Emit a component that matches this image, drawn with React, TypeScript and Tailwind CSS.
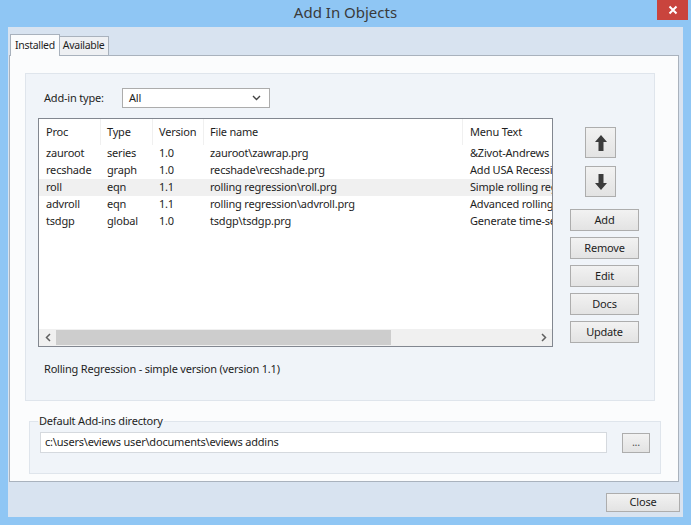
import React from "react";

const rows = [
  { proc: "zauroot", type: "series", ver: "1.0", file: "zauroot\\zawrap.prg", menu: "&Zivot-Andrews Unit Root Test" },
  { proc: "recshade", type: "graph", ver: "1.0", file: "recshade\\recshade.prg", menu: "Add USA Recession Shading" },
  { proc: "roll", type: "eqn", ver: "1.1", file: "rolling regression\\roll.prg", menu: "Simple rolling regression", sel: true },
  { proc: "advroll", type: "eqn", ver: "1.1", file: "rolling regression\\advroll.prg", menu: "Advanced rolling regression" },
  { proc: "tsdgp", type: "global", ver: "1.0", file: "tsdgp\\tsdgp.prg", menu: "Generate time-series DGP" },
];

function Btn({ label, className = "" }: { label: string; className?: string }) {
  return (
    <div
      className={
        "flex items-center justify-center border border-[#adadad] bg-gradient-to-b from-[#f2f2f2] to-[#e3e3e3] text-[#1e1e1e] " +
        className
      }
    >
      {label}
    </div>
  );
}

function ArrowBtn({ up }: { up: boolean }) {
  return (
    <div className="flex h-[31px] w-[31px] items-center justify-center border border-[#adadad] bg-gradient-to-b from-[#f2f2f2] to-[#e3e3e3]">
      <svg width="14" height="18" viewBox="0 0 14 18">
        {up ? (
          <path d="M7 1 L13 8 L9.5 8 L9.5 17 L4.5 17 L4.5 8 L1 8 Z" fill="#3c3c3c" />
        ) : (
          <path d="M7 17 L13 10 L9.5 10 L9.5 1 L4.5 1 L4.5 10 L1 10 Z" fill="#3c3c3c" />
        )}
      </svg>
    </div>
  );
}

export default function App() {
  return (
    <div
      className="relative flex h-[525px] w-[691px] flex-col bg-[#8fc6f4] text-[11px] tracking-[-0.2px] text-[#1e1e1e]"
      style={{ fontFamily: '"Noto Sans", "Open Sans", sans-serif' }}
    >
      {/* title bar */}
      <div className="flex h-[27px] items-start justify-center pt-[1px] text-[15px] leading-[22px] tracking-normal text-[#3a3a3a]">
        Add In Objects
      </div>
      <div className="absolute right-[3px] top-0 flex h-[20px] w-[31px] items-center justify-center bg-[#c9443d]">
        <svg width="10" height="10" viewBox="0 0 10 10">
          <path d="M1.5 1.5 L8.5 8.5 M8.5 1.5 L1.5 8.5" stroke="#ffffff" strokeWidth="2" />
        </svg>
      </div>

      {/* client area */}
      <div className="mx-[8px] flex h-[490px] flex-col bg-[#d8e3f0]">
        {/* tabs */}
        <div className="ml-[2px] mt-[7px] flex h-[21px] items-end text-[10.5px] tracking-[-0.3px]">
          <div className="relative z-10 -mb-px flex h-[22px] items-center border border-b-0 border-[#a9b2bd] bg-[#fbfcfd] px-[4px]">
            Installed
          </div>
          <div className="flex h-[19px] items-center border border-b-0 border-l-0 border-[#a9b2bd] bg-[#eef0f3] px-[3px]">
            Available
          </div>
        </div>

        {/* tab panel */}
        <div className="ml-[1px] flex h-[427px] w-[670px] flex-col border border-[#a9b2bd] bg-[#fbfcfd]">
          {/* inner group */}
          <div className="ml-[15px] mt-[17px] flex h-[328px] w-[630px] flex-col border border-[#dfe5ec] bg-[#f0f4f9]">
            <div className="ml-[18px] mt-[14px] flex h-[20px] items-center">
              <div className="w-[78px]">Add-in type:</div>
              <div className="flex h-[20px] w-[148px] items-center justify-between border border-[#acacac] bg-white pl-[6px] pr-[8px]">
                <span>All</span>
                <svg width="9" height="6" viewBox="0 0 9 6">
                  <path d="M1 1 L4.5 4.5 L8 1" stroke="#444" strokeWidth="1.4" fill="none" />
                </svg>
              </div>
            </div>

            <div className="ml-[12px] mt-[10px] flex">
              {/* list */}
              <div className="flex h-[229px] w-[515px] flex-col overflow-hidden border border-[#828790] bg-white">
                <div className="flex h-[26px] items-start whitespace-nowrap">
                  <div className="h-full w-[62px] border-r border-[#f0f0f0] pl-[7px] leading-[25px]">Proc</div>
                  <div className="h-full w-[52px] border-r border-[#f0f0f0] pl-[6px] leading-[25px]">Type</div>
                  <div className="h-full w-[51px] border-r border-[#f0f0f0] pl-[6px] leading-[25px]">Version</div>
                  <div className="h-full w-[259px] border-r border-[#f0f0f0] pl-[6px] leading-[25px]">File name</div>
                  <div className="h-full flex-1 pl-[7px] leading-[25px]">Menu Text</div>
                </div>
                <div className="flex-1">
                  {rows.map((r) => (
                    <div
                      key={r.proc}
                      className={"flex h-[17px] items-center whitespace-nowrap " + (r.sel ? "bg-[#f0f0f0]" : "")}
                    >
                      <div className="w-[62px] pl-[7px]">{r.proc}</div>
                      <div className="w-[52px] pl-[6px]">{r.type}</div>
                      <div className="w-[51px] pl-[6px]">{r.ver}</div>
                      <div className="w-[259px] pl-[6px]">{r.file}</div>
                      <div className="w-[89px] overflow-hidden pl-[7px]">{r.menu}</div>
                    </div>
                  ))}
                </div>
                {/* scrollbar */}
                <div className="flex h-[17px] items-center bg-[#f0f0f0]">
                  <div className="flex h-full w-[17px] items-center justify-center">
                    <svg width="6" height="9" viewBox="0 0 6 9">
                      <path d="M5 1 L1.5 4.5 L5 8" stroke="#606060" strokeWidth="1.5" fill="none" />
                    </svg>
                  </div>
                  <div className="h-[15px] w-[335px] bg-[#cdcdcd]" />
                  <div className="flex-1" />
                  <div className="flex h-full w-[17px] items-center justify-center">
                    <svg width="6" height="9" viewBox="0 0 6 9">
                      <path d="M1 1 L4.5 4.5 L1 8" stroke="#606060" strokeWidth="1.5" fill="none" />
                    </svg>
                  </div>
                </div>
              </div>

              {/* buttons */}
              <div className="ml-[17px] mt-[9px] flex w-[69px] flex-col items-start">
                <div className="ml-[15px]">
                  <ArrowBtn up />
                </div>
                <div className="h-[8px]" />
                <div className="ml-[15px]">
                  <ArrowBtn up={false} />
                </div>
                <div className="flex w-full flex-col gap-[6px] pt-[12px]">
                  <Btn label="Add" className="h-[22px] w-[69px]" />
                  <Btn label="Remove" className="h-[22px] w-[69px]" />
                  <Btn label="Edit" className="h-[22px] w-[69px]" />
                  <Btn label="Docs" className="h-[22px] w-[69px]" />
                  <Btn label="Update" className="h-[22px] w-[69px]" />
                </div>
              </div>
            </div>

            <div className="ml-[18px] mt-[14px]">Rolling Regression - simple version (version 1.1)</div>
          </div>

          {/* default directory group */}
          <fieldset className="ml-[19px] mt-[13px] h-[60px] w-[626px] border border-[#dfe5ec] bg-[#f0f4f9] px-[10px]">
            <legend className="-ml-[2px] px-[1px] leading-[14px]">Default Add-ins directory</legend>
            <div className="flex items-center pt-[4px]">
              <div className="flex h-[21px] w-[567px] items-center border border-[#d5d9de] bg-white pl-[4px]">
                c:\users\eviews user\documents\eviews addins
              </div>
              <Btn label="..." className="ml-[15px] h-[20px] w-[28px] text-[11px] text-[#555]" />
            </div>
          </fieldset>
        </div>

        {/* close */}
        <div className="flex justify-end pr-[3px] pt-[11px]">
          <Btn label="Close" className="h-[19px] w-[74px]" />
        </div>
      </div>
    </div>
  );
}
